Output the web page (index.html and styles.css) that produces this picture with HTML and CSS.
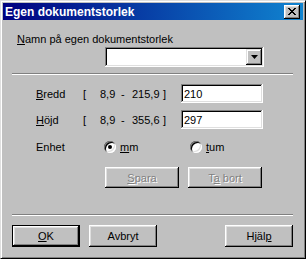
FILE: index.html
```html
<!DOCTYPE html>
<html lang="sv">
<head>
    <meta charset="UTF-8">
    <meta name="viewport" content="width=device-width, initial-scale=1.0">
    <title>Egen dokumentstorlek</title>
    <link rel="stylesheet" href="styles.css">
</head>
<body>
    <div class="window">
        <div class="titlebar">
            <span class="title">Egen dokumentstorlek</span>
            <span class="close">
                <svg width="8" height="7" viewBox="0 0 8 7">
                    <path d="M0 0h2v1h1v1h2v-1h1v-1h2v1h-1v1h-1v1h-1v1h1v1h1v1h1v1h-2v-1h-1v-1h-2v1h-1v1h-2v-1h1v-1h1v-1h1v-1h-1v-1h-1v-1h-1z" fill="#000"/>
                </svg>
            </span>
        </div>
        <div class="content">
            <div class="name-label"><u>N</u>amn på egen dokumentstorlek</div>
            <div class="combo">
                <div class="combo-field"></div>
                <div class="combo-btn">
                    <svg width="7" height="4" viewBox="0 0 7 4"><path d="M0 0h7l-3.5 4z" fill="#000"/></svg>
                </div>
            </div>
            <div class="separator"></div>

            <div class="row size-row">
                <span class="row-label"><u>B</u>redd</span>
                <span class="bracket">[</span>
                <span class="low">8,9</span>
                <span class="dash">-</span>
                <span class="high">215,9</span>
                <span class="bracket-end">]</span>
                <div class="field">210</div>
            </div>
            <div class="row size-row second">
                <span class="row-label"><u>H</u>öjd</span>
                <span class="bracket">[</span>
                <span class="low">8,9</span>
                <span class="dash">-</span>
                <span class="high">355,6</span>
                <span class="bracket-end">]</span>
                <div class="field">297</div>
            </div>

            <div class="row unit-row">
                <span class="unit-label">Enhet</span>
                <span class="option mm"><span class="radio checked"></span><span><u>m</u>m</span></span>
                <span class="option"><span class="radio"></span><span><u>t</u>um</span></span>
            </div>

            <div class="row save-row">
                <button class="button disabled"><u>S</u>para</button>
                <button class="button disabled">T<u>a</u> bort</button>
            </div>

            <div class="separator lower"></div>

            <div class="row footer">
                <button class="button default"><u>O</u>K</button>
                <button class="button">Avbryt</button>
                <button class="button help">Hjäl<u>p</u></button>
            </div>
        </div>
    </div>
</body>
</html>
```

FILE: styles.css
```css
body {
    margin: 0;
    background: #c0c0c0;
    font-family: 'Liberation Sans', Arial, sans-serif;
    font-size: 11px;
    color: #000;
}
.window {
    width: 306px;
    height: 259px;
    box-sizing: border-box;
    background: #c0c0c0;
    border: 1px solid;
    border-color: #dfdfdf #000 #000 #dfdfdf;
    box-shadow: inset 1px 1px #fff, inset -1px -1px #808080;
    padding: 2px;
}
.titlebar {
    height: 17px;
    background: linear-gradient(90deg, #000080, #1084d0);
    display: flex;
    align-items: center;
    justify-content: space-between;
    padding: 0 3px 0 2px;
}
.title {
    color: #fff;
    font-weight: bold;
    font-size: 12px;
}
.close {
    width: 16px;
    height: 14px;
    box-sizing: border-box;
    background: #c0c0c0;
    box-shadow: inset -1px -1px #000, inset 1px 1px #fff, inset -2px -2px #808080, inset 2px 2px #dfdfdf;
    display: flex;
    align-items: center;
    justify-content: center;
}
.close svg {
    display: block;
}
.content {
    padding: 0 10px 0 9px;
    display: flex;
    flex-direction: column;
}
.name-label {
    margin: 12px 0 0 5px;
    line-height: 14px;
}
.combo {
    margin: 1px 0 0 93px;
    width: 159px;
    height: 20px;
    box-sizing: border-box;
    background: #fff;
    box-shadow: inset -1px -1px #fff, inset 1px 1px #808080, inset -2px -2px #dfdfdf, inset 2px 2px #000;
    padding: 2px;
    display: flex;
}
.combo-field {
    flex: 1;
}
.combo-btn {
    width: 16px;
    background: #c0c0c0;
    box-shadow: inset -1px -1px #000, inset 1px 1px #dfdfdf, inset -2px -2px #808080, inset 2px 2px #fff;
    display: flex;
    align-items: center;
    justify-content: center;
}
.combo-btn svg {
    display: block;
}
.separator {
    margin-top: 6px;
    height: 1px;
    background: #808080;
    border-bottom: 1px solid #fff;
}
.separator.lower {
    margin-top: 26px;
}
.row {
    display: flex;
    align-items: center;
}
.size-row {
    margin-top: 9px;
    height: 19px;
    padding-left: 24px;
}
.size-row.second {
    margin-top: 7px;
}
.row-label {
    width: 47px;
}
.bracket {
    width: 17px;
}
.low {
    width: 21px;
}
.dash {
    width: 11px;
}
.high {
    width: 31px;
}
.bracket-end {
    width: 18px;
}
.field {
    width: 82px;
    height: 19px;
    box-sizing: border-box;
    background: #fff;
    box-shadow: inset -1px -1px #fff, inset 1px 1px #808080, inset -2px -2px #dfdfdf, inset 2px 2px #000;
    padding: 3px 3px 0;
    line-height: 14px;
}
.unit-row {
    margin-top: 11px;
    height: 14px;
    padding-left: 24px;
}
.unit-label {
    width: 68px;
}
.option {
    display: flex;
    align-items: center;
    gap: 4px;
}
.option.mm {
    width: 86px;
}
.radio {
    width: 12px;
    height: 12px;
    border-radius: 50%;
    background: #fff;
    box-shadow: inset 1px 1px #808080, inset -1px -1px #fff, inset 2px 2px #000, inset -2px -2px #dfdfdf;
    display: flex;
    align-items: center;
    justify-content: center;
}
.radio.checked::after {
    content: "";
    width: 4px;
    height: 4px;
    border-radius: 50%;
    background: #000;
}
.save-row {
    margin: 13px 0 0 93px;
    gap: 9px;
}
.button {
    font-family: inherit;
    font-size: 11px;
    color: #000;
    width: 74px;
    height: 21px;
    padding: 0;
    border: none;
    background: #c0c0c0;
    box-shadow: inset -1px -1px #000, inset 1px 1px #fff, inset -2px -2px #808080, inset 2px 2px #dfdfdf;
}
.button.disabled {
    color: #808080;
    text-shadow: 1px 1px #fff;
}
.footer {
    margin-top: 9px;
    gap: 9px;
}
.footer .button {
    width: 68px;
    height: 22px;
}
.button.default {
    border: 1px solid #000;
}
.button.help {
    margin-left: auto;
}
```
